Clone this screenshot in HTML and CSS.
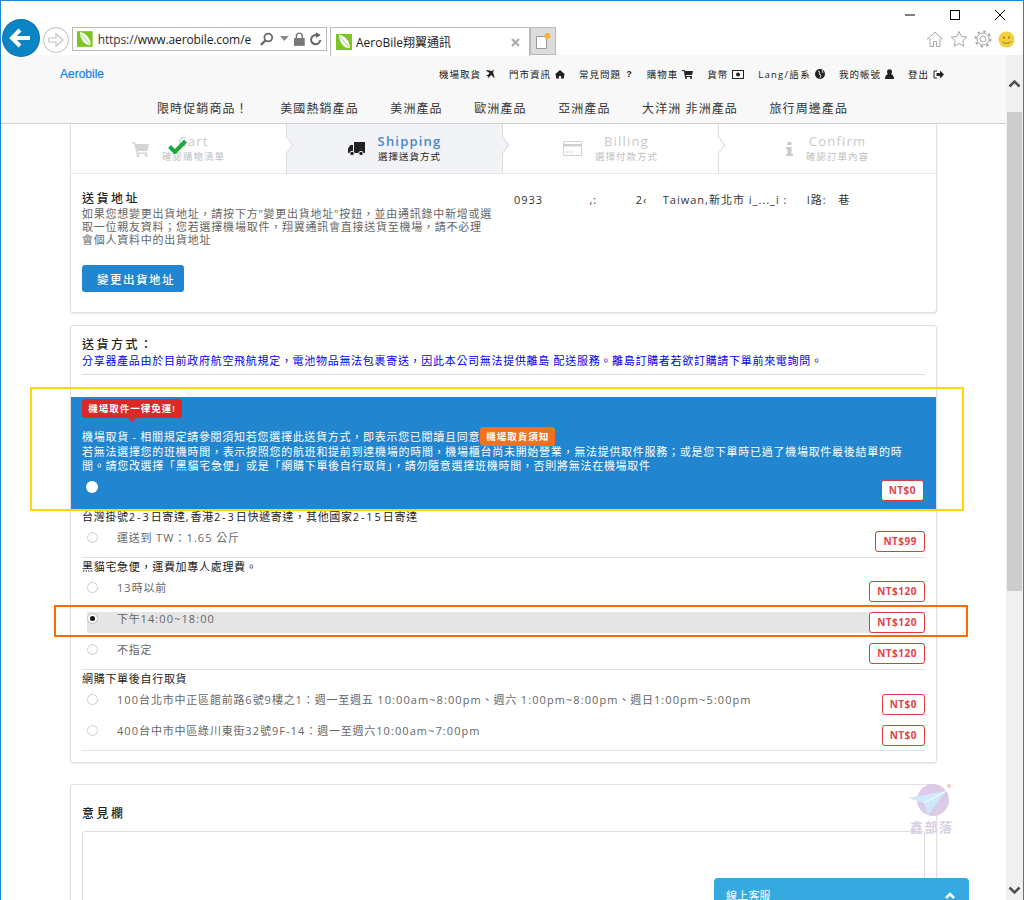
FILE: index.html
```html
<!DOCTYPE html>
<html lang="zh-Hant">
<head>
<meta charset="utf-8">
<title>AeroBile翔翼通訊</title>
<link rel="stylesheet" href="styles.css">
</head>
<body>
<div class="window">
  <div class="chrome">
    <div class="navgroup">
      <button class="back"><svg width="36" height="36" viewBox="0 0 36 36"><path d="M27 18H10M17 10l-8 8 8 8" fill="none" stroke="#fff" stroke-width="4"/></svg></button>
      <button class="forward"><svg width="26" height="26" viewBox="0 0 26 26"><circle cx="13" cy="13" r="12.5" fill="#fff" stroke="#bdbdbd"/><path d="M6 11h7V7l7 6-7 6v-4H6z" fill="none" stroke="#c4c4c4" stroke-width="1.2"/></svg></button>
      <div class="address">
        <svg class="fav" width="16" height="16" viewBox="0 0 16 16"><rect width="16" height="16" fill="#7cc520"/><path d="M3 1c5 0 11 6 11 13-6 1-11-6-11-13z" fill="#fff"/><path d="M4 3l9 10" stroke="#7cc520" stroke-width=".8"/></svg>
        <span class="url"><span class="url-a">https://</span>www.aerobile.com/e</span>
        <svg width="16" height="16" viewBox="0 0 16 16"><circle cx="9.5" cy="6.5" r="4" fill="none" stroke="#666" stroke-width="1.8"/><path d="M6.500 9.500L2 14" stroke="#666" stroke-width="2.200"/></svg>
        <svg width="9" height="6" viewBox="0 0 9 6"><path d="M0 0h9L4.500 5z" fill="#888"/></svg>
        <svg width="12" height="14" viewBox="0 0 12 14"><rect y="6" width="11" height="8" fill="#777"/><path d="M2.500 6V4a3 3 0 0 1 6 0v2" fill="none" stroke="#777" stroke-width="1.500"/></svg>
        <svg width="12" height="14" viewBox="0 0 12 14"><path d="M10.500 8A4.700 4.700 0 1 1 7.500 3.300" fill="none" stroke="#666" stroke-width="2"/><path d="M6 0l5 3-5 3z" fill="#666"/></svg>
      </div>
      <div class="tab">
        <svg width="16" height="16" viewBox="0 0 16 16"><rect width="16" height="16" fill="#7cc520"/><path d="M3 1c5 0 11 6 11 13-6 1-11-6-11-13z" fill="#fff"/><path d="M4 3l9 10" stroke="#7cc520" stroke-width=".8"/></svg>
        <span class="tab-title">AeroBile翔翼通訊</span>
        <svg class="tab-x" width="9" height="9" viewBox="0 0 9 9"><path d="M1 1l7 7M8 1L1 8" stroke="#aaa" stroke-width="2"/></svg>
      </div>
      <div class="newtab"><svg width="18" height="18" viewBox="0 0 18 18"><path d="M2.500 4.500h10v12h-10z" fill="#fff" stroke="#999"/><circle cx="13.500" cy="4" r="3" fill="#f9b233"/></svg></div>
    </div>
    <div class="rightgroup">
      <div class="winctl">
        <svg width="12" height="12" viewBox="0 0 12 12"><path d="M1 6h10" stroke="#000"/></svg>
        <svg width="12" height="12" viewBox="0 0 12 12"><rect x="1.500" y="1.500" width="9" height="9" fill="none" stroke="#000"/></svg>
        <svg width="12" height="12" viewBox="0 0 12 12"><path d="M1 1l10 10M11 1L1 11" stroke="#000"/></svg>
      </div>
      <div class="tools">
        <svg width="18" height="18" viewBox="0 0 18 18"><path d="M1 9.500L9 2l8 7.500M4 8v8.500h3.500v-5h3v5H14V8" fill="#fff" stroke="#a8a8a8"/></svg>
        <svg width="18" height="18" viewBox="0 0 18 18"><path d="M9 1.500l2.300 5 5.400.6-4 3.700 1.100 5.400L9 13.500l-4.800 2.700 1.100-5.400-4-3.700 5.400-.6z" fill="#fff" stroke="#a8a8a8"/></svg>
        <svg width="18" height="18" viewBox="0 0 18 18"><circle cx="9" cy="9" r="3" fill="none" stroke="#a8a8a8"/><circle cx="9" cy="9" r="6" fill="none" stroke="#a8a8a8" stroke-width="1"/><circle cx="9" cy="9" r="7.500" fill="none" stroke="#a8a8a8" stroke-width="2" stroke-dasharray="2.500 3.400"/></svg>
        <svg width="17" height="17" viewBox="0 0 17 17"><circle cx="8.500" cy="8.500" r="8" fill="#f2cf3c"/><circle cx="6" cy="6.500" r="1" fill="#8a7420"/><circle cx="11" cy="6.500" r="1" fill="#8a7420"/><path d="M4.500 10.500c1.500 2.500 6.500 2.500 8 0" fill="none" stroke="#8a7420"/></svg>
      </div>
    </div>
  </div>

  <div class="viewport">
    <div class="page">
      <header class="site-header">
        <div class="toprow">
          <a class="logo">Aerobile</a>
          <nav class="topnav">
            <a>機場取貨<svg width="10" height="10" viewBox="0 0 10 10"><path d="M9.500.500L7 2 1.500 1 1 1.500l3.500 2.500L3 6 1 6l2 1.500L4 9.500l.5-2 2-1.500L9 9l.5-.5L8 3z" fill="#222"/></svg></a>
            <a>門市資訊<svg width="10" height="10" viewBox="0 0 10 10"><path d="M0 5.500L5 1l5 4.500-1 .5v3.500H6V7H4v2.500H1V6z" fill="#222"/></svg></a>
            <a>常見問題<b class="q">?</b></a>
            <a>購物車<svg width="11" height="10" viewBox="0 0 11 10"><path d="M0 1h2.500l.5 1h8l-1 4H4l.3 1H10v1H3L1.800 2H0z" fill="#222"/><circle cx="4" cy="9" r="1" fill="#222"/><circle cx="9" cy="9" r="1" fill="#222"/></svg></a>
            <a>貨幣<svg width="12" height="9" viewBox="0 0 12 9"><rect x=".5" y=".5" width="11" height="8" fill="none" stroke="#222"/><circle cx="6" cy="4.500" r="2" fill="#222"/></svg></a>
            <a class="lang">Lang/語系<svg width="10" height="10" viewBox="0 0 10 10"><circle cx="5" cy="5" r="5" fill="#222"/><path d="M3 2l2 1-1 2 2 1-1 3M7 1l1 3" stroke="#fff" fill="none" stroke-width=".8"/></svg></a>
            <a>我的帳號<svg width="9" height="10" viewBox="0 0 9 10"><circle cx="4.500" cy="2.800" r="2.500" fill="#222"/><path d="M0 10c0-7 9-7 9 0z" fill="#222"/></svg></a>
            <a>登出<svg width="11" height="9" viewBox="0 0 11 9"><path d="M4 1H1v7h3" fill="none" stroke="#222"/><path d="M3.500 3H7V.5l4 4-4 4V6H3.500z" fill="#222"/></svg></a>
          </nav>
        </div>
        <nav class="mainnav">
          <a>限時促銷商品！</a><a>美國熱銷產品</a><a>美洲產品</a><a>歐洲產品</a><a>亞洲產品</a><a>大洋洲 非洲產品</a><a>旅行周邊產品</a>
        </nav>
      </header>

      <section class="card card-first">
        <div class="steps">
          <div class="step done">
            <svg class="step-icon" width="17" height="16" viewBox="0 0 17 16"><path d="M0 1h3l.6 2H17l-1.500 7H5.500l.4 1.500H15V13H4.500L2 2.500H0z" fill="#d4d4d4"/><circle cx="6" cy="14.500" r="1.500" fill="#d4d4d4"/><circle cx="14" cy="14.500" r="1.500" fill="#d4d4d4"/></svg>
            <div class="step-text"><div class="step-title">Cart</div><div class="step-sub">確認購物清單</div></div>
            <svg class="check" width="19" height="15" viewBox="0 0 19 15"><path d="M1.500 7.500L7 13 17.500 2" fill="none" stroke="#1fa83f" stroke-width="4"/></svg>
          </div>
          <div class="step active">
            <svg class="step-icon" width="17" height="14" viewBox="0 0 17 14"><path d="M6 0h11v11H6zM5 3v8H0V6.500L2.500 3z" fill="#222"/><circle cx="4" cy="11.500" r="2.200" fill="#222" stroke="#f0f2f5"/><circle cx="13" cy="11.500" r="2.200" fill="#222" stroke="#f0f2f5"/></svg>
            <div class="step-text"><div class="step-title">Shipping</div><div class="step-sub">選擇送貨方式</div></div>
          </div>
          <div class="step">
            <svg class="step-icon" width="19" height="15" viewBox="0 0 19 15"><rect width="19" height="15" rx="1.500" fill="#d0d0d0"/><rect x="1" y="5.500" width="17" height="8.500" fill="#fff"/><rect x="1" y="1" width="17" height="2" fill="#fff"/><rect x="3" y="10.500" width="3" height="1" fill="#d0d0d0"/><rect x="7" y="10.500" width="3" height="1" fill="#d0d0d0"/></svg>
            <div class="step-text"><div class="step-title">Billing</div><div class="step-sub">選擇付款方式</div></div>
          </div>
          <div class="step last">
            <svg class="step-icon" width="7" height="14" viewBox="0 0 7 14"><rect x="1.500" width="4" height="3" fill="#c8c8c8"/><path d="M0 5h5.500v7H7v2H0v-2h1.500V7H0z" fill="#c8c8c8"/></svg>
            <div class="step-text"><div class="step-title">Confirm</div><div class="step-sub">確認訂單內容</div></div>
          </div>
        </div>
        <div class="addr">
          <div class="addr-left">
            <h3 class="heading">送貨地址</h3>
            <p class="addr-desc">如果您想變更出貨地址，請按下方"變更出貨地址"按鈕，並由通訊錄中新增或選<br>取一位親友資料；您若選擇機場取件，翔翼通訊會直接送貨至機場，請不必理<br>會個人資料中的出貨地址</p>
            <button class="btn-primary">變更出貨地址</button>
          </div>
          <div class="addr-right">0933            ,:          2‹    Taiwan,新北市 i_..._i :     I路:   巷</div>
        </div>
      </section>

      <section class="card card-ship">
        <div class="ship-head">
          <h3 class="heading">送貨方式：</h3>
          <p class="notice">分享器產品由於目前政府航空飛航規定，電池物品無法包裹寄送，因此本公司無法提供離島 配送服務。離島訂購者若欲訂購請下單前來電詢問。</p>
        </div>
        <div class="panel">
          <div class="tag">機場取件一律免運!</div>
          <div class="panel-line1">機場取貨 - 相關規定請參閱須知若您選擇此送貨方式，即表示您已閱讀且同意<a class="btn-orange">機場取貨須知</a></div>
          <p class="panel-text">若無法選擇您的班機時間，表示按照您的航班和提前到達機場的時間，機場櫃台尚未開始營業，無法提供取件服務；或是您下單時已過了機場取件最後結單的時<br>間。請您改選擇「黑貓宅急便」或是「網購下單後自行取貨」，請勿隨意選擇班機時間，否則將無法在機場取件</p>
          <div class="panel-foot"><span class="radio-white"></span><span class="price price-w">NT$0</span></div>
        </div>
        <div class="group g1">
          <div class="group-title">台灣掛號<span class="num">2-3</span>日寄達<span class="num">,</span>香港<span class="num">2-3</span>日快遞寄達，其他國家<span class="num">2-15</span>日寄達</div>
          <div class="opt"><span class="radio"></span><span class="opt-label">運送到 <span class="lt">TW：1.65</span> 公斤</span><span class="price">NT$99</span></div>
        </div>
        <div class="group g2">
          <div class="group-title">黑貓宅急便，運費加專人處理費。</div>
          <div class="opt"><span class="radio"></span><span class="opt-label"><span class="lt">13</span>時以前</span><span class="price">NT$120</span></div>
          <div class="opt selected"><span class="radio on"></span><span class="opt-label">下午<span class="lt">14:00~18:00</span></span><span class="price">NT$120</span></div>
          <div class="opt"><span class="radio"></span><span class="opt-label">不指定</span><span class="price">NT$120</span></div>
        </div>
        <div class="group g3">
          <div class="group-title">網購下單後自行取貨</div>
          <div class="opt"><span class="radio"></span><span class="opt-label"><span class="lt">100</span>台北市中正區館前路<span class="lt">6</span>號<span class="lt">9</span>樓之<span class="lt">1</span>：週一至週五 <span class="lt">10:00am~8:00pm</span>、週六 <span class="lt">1:00pm~8:00pm</span>、週日<span class="lt">1:00pm~5:00pm</span></span><span class="price">NT$0</span></div>
          <div class="opt"><span class="radio"></span><span class="opt-label"><span class="lt">400</span>台中市中區綠川東街<span class="lt">32</span>號<span class="lt">9F-14</span>：週一至週六<span class="lt">10:00am~7:00pm</span></span><span class="price">NT$0</span></div>
        </div>
      </section>

      <section class="card card-note">
        <h3 class="heading note-head">意見欄</h3>
        <div class="textarea"></div>
      </section>

      <div class="mark mark-yellow"></div>
      <div class="mark mark-orange"></div>
      <div class="watermark">
        <svg width="45" height="38" viewBox="0 0 45 38"><circle cx="25" cy="17" r="16" fill="#dccbe8"/><circle cx="41" cy="3" r="2" fill="#f7c6cc"/><path d="M0 15L38 8 20 32 16 20z" fill="#cde9fb"/><path d="M16 20L38 8" stroke="#fff" stroke-width="1"/></svg>
        <div class="wm-text">鑫部落</div>
      </div>
      <div class="chat"><span>線上客服</span><svg width="10" height="7" viewBox="0 0 10 7"><path d="M1 6l4-4 4 4" fill="none" stroke="#fff" stroke-width="2.500"/></svg></div>
    </div>
    <div class="scrollbar">
      <div class="sb-up"><svg width="13" height="9" viewBox="0 0 13 9"><path d="M1.500 7.500l5-5 5 5" fill="none" stroke="#505050" stroke-width="2.500"/></svg></div>
      <div class="sb-thumb"></div>
      <div class="sb-rest"></div>
      <div class="sb-down"><svg width="13" height="9" viewBox="0 0 13 9"><path d="M1.500 1.500l5 5 5-5" fill="none" stroke="#505050" stroke-width="2.500"/></svg></div>
    </div>
  </div>
</div>
</body>
</html>
```

FILE: styles.css
```css
* { box-sizing: border-box; }
html, body { margin: 0; padding: 0; }
body {
  width: 1024px;
  height: 900px;
  overflow: hidden;
  background: #fff;
  font-family: "Open Sans", "Noto Sans CJK TC", sans-serif;
  color: #333;
}
h3, p { margin: 0; }
button { font-family: inherit; border: 0; padding: 0; cursor: pointer; }

.window {
  position: relative;
  display: flex;
  flex-direction: column;
  width: 1024px;
  height: 900px;
  border: 1px solid #1f86d6;
  border-bottom: 0;
  overflow: hidden;
}

/* browser chrome */
.chrome {
  position: relative;
  z-index: 3;
  display: flex;
  justify-content: space-between;
  height: 54px;
  background: #fff;
}
.navgroup { display: flex; align-items: flex-start; padding: 26px 0 0 2px; }
.back {
  display: flex;
  align-items: center;
  justify-content: center;
  width: 36px;
  height: 36px;
  margin: -7px 4px 0 0;
  border-radius: 50%;
  background: #0b84c6;
  box-shadow: 0 0 0 1px #0a6ea6;
}
.forward { width: 26px; height: 26px; margin-right: 3px; background: none; }
.address {
  display: flex;
  align-items: center;
  gap: 5px;
  width: 255px;
  height: 24px;
  padding: 0 4px;
  border: 1px solid #b9b9b9;
  background: #fff;
}
.url {
  width: 160px;
  font-size: 12px;
  letter-spacing: -.1px;
  color: #222;
  white-space: nowrap;
}
.url-a { color: #333; }
.tab {
  display: flex;
  align-items: center;
  gap: 4px;
  width: 200px;
  height: 29px;
  margin-left: 3px;
  padding: 0 5px;
  border: 1px solid #b9b9b9;
  border-bottom: 0;
  background: #fff;
}
.tab-title { flex: 1; font-size: 12px; color: #222; white-space: nowrap; }
.tab-x { margin-right: 4px; }
.newtab {
  display: flex;
  align-items: center;
  justify-content: center;
  width: 26px;
  height: 28px;
  border: 1px solid #b9b9b9;
  background: #dcdcdc;
}
.rightgroup { display: flex; flex-direction: column; align-items: flex-end; padding-right: 8px; }
.winctl { display: flex; gap: 33px; padding: 8px 9px 0 0; }
.tools { display: flex; gap: 6px; align-items: center; margin-top: 9px; }

/* page */
.viewport { display: flex; flex: 1; min-height: 0; }
.page { position: relative; flex: 1; min-width: 0; overflow: hidden; background: #fff; }
.site-header {
  height: 69px;
  background: #f8f8f8;
  border-bottom: 1px solid #cfcfcf;
}
.toprow { display: flex; align-items: center; justify-content: space-between; height: 38px; padding: 0 62px 0 59px; }
.logo { font-family: "Liberation Sans", sans-serif; font-size: 12px; color: #1a7ee0; -webkit-text-stroke: .2px #1a7ee0; }
.topnav { display: flex; gap: 14px; }
.topnav a {
  display: flex;
  align-items: center;
  gap: 4px;
  font-size: 9.500px;
  letter-spacing: 1px;
  color: #222;
  white-space: nowrap;
}
.topnav .lang { letter-spacing: 1.300px; }
.q { font-size: 9px; font-family: "Liberation Sans", sans-serif; margin-left: 1px; }
.mainnav { display: flex; gap: 31.500px; padding-left: 156px; height: 30px; }
.mainnav a { font-size: 12px; letter-spacing: 1.100px; line-height: 31px; color: #333; white-space: nowrap; }

.card {
  width: 867px;
  margin-left: 69px;
  background: #fff;
  border: 1px solid #e0e0e0;
  border-radius: 3px;
  box-shadow: 0 1px 2px rgba(0,0,0,.08);
}
.card-first { height: 189px; border-top: 0; border-radius: 0 0 3px 3px; }
.steps { display: flex; height: 50px; border-bottom: 1px solid #e8e8e8; }
.step {
  position: relative;
  display: flex;
  flex: 0 0 216px;
  align-items: center;
  justify-content: center;
  gap: 13px;
  border-right: 1px solid #dcdcdc;
}
.step.last { flex: 1; border-right: 0; }
.step:not(.last)::after {
  content: "";
  position: absolute;
  z-index: 1;
  top: 15px;
  right: -6px;
  width: 11px;
  height: 11px;
  background: #fff;
  border-top: 1px solid #dcdcdc;
  border-right: 1px solid #dcdcdc;
  transform: rotate(45deg) skew(8deg, 8deg);
}
.step.active { background: #f1f3f6; }
.step.active::after { background: #f1f3f6; }
.step-text { text-align: center; }
.step-title { font-size: 13px; line-height: 14px; letter-spacing: 1.200px; color: #c9c9c9; }
.step-sub { margin-top: 2px; font-size: 9.500px; line-height: 13px; letter-spacing: 1px; color: #c0c0c0; white-space: nowrap; }
.step.active .step-title { color: #4a86c8; font-weight: 600; }
.step.active .step-sub { color: #222; }
.check { position: absolute; top: 15px; left: 97px; }

.addr { display: flex; padding: 17px 11px 0; }
.addr-left { width: 432px; flex: none; }
.heading { font-size: 12px; font-weight: 500; letter-spacing: 2.500px; line-height: 16px; color: #222; }
.addr-desc { font-size: 11px; letter-spacing: .76px; line-height: 13px; color: #666; white-space: nowrap; }
.btn-primary {
  display: block;
  width: 102px;
  height: 27px;
  margin-top: 19px;
  padding-left: 6px;
  border-radius: 3px;
  background: #2185d0;
  color: #fff;
  font-size: 11.500px;
  letter-spacing: 1.500px;
  font-weight: 500;
  white-space: nowrap;
}
.addr-right { padding-top: 1px; font-size: 11px; letter-spacing: 1px; line-height: 16px; color: #333; white-space: pre; }

.card-ship { height: 438px; margin-top: 12px; }
.ship-head { height: 71px; margin: 0 11px; padding-top: 11px; }
.notice {
  height: 22px;
  border-bottom: 1px solid #ddd;
  font-size: 11px;
  letter-spacing: .7px;
  line-height: 15px;
  color: #0000f0;
  white-space: nowrap;
}
.panel { position: relative; height: 112px; padding: 2px 11px 0; background: #2185d0; color: #fff; }
.tag {
  position: relative;
  width: 100px;
  height: 19px;
  border-radius: 3px;
  background: #db2828;
  font-size: 9.500px;
  line-height: 19px;
  letter-spacing: 1px;
  font-weight: 600;
  text-align: center;
  white-space: nowrap;
}
.tag::after {
  content: "";
  position: absolute;
  left: 46px;
  bottom: -4px;
  width: 8px;
  height: 8px;
  background: #db2828;
  transform: rotate(45deg) scale(.7);
}
.panel-line1 {
  display: flex;
  align-items: center;
  height: 18px;
  margin-top: 9px;
  font-size: 11px;
  letter-spacing: .72px;
  white-space: nowrap;
}
.btn-orange {
  flex: none;
  width: 75px;
  height: 19px;
  border-radius: 3px;
  background: #f2711c;
  font-size: 9.500px;
  line-height: 20px;
  letter-spacing: 1px;
  font-weight: 600;
  text-align: center;
  white-space: nowrap;
}
.panel-text { font-size: 11px; letter-spacing: .72px; line-height: 13.500px; white-space: nowrap; }
.panel-foot { display: flex; align-items: flex-start; justify-content: space-between; margin-top: 8px; }
.radio-white { width: 12px; height: 12px; margin: 1px 0 0 4px; border-radius: 50%; background: #fff; }
.price {
  flex: none;
  margin-left: auto;
  padding: 0 7px;
  height: 21px;
  border: 1px solid #e03a3a;
  border-radius: 3px;
  background: #fff;
  color: #e0434a;
  font-size: 10px;
  font-weight: 700;
  letter-spacing: .5px;
  line-height: 19px;
}
.price-w { margin-right: 1px; }

.group { margin: 0 11px; border-bottom: 1px solid #e2e2e2; padding-bottom: 4px; }
.g1 { height: 49px; }
.g2 { height: 112px; }
.g3 { height: 81px; }
.group-title { font-size: 11px; letter-spacing: .7px; line-height: 16px; color: #222; white-space: nowrap; }
.num { letter-spacing: 1.900px; }
.opt {
  display: flex;
  align-items: flex-start;
  height: 21px;
  margin-top: 10px;
  margin-left: 5px;
}
.g1 .opt { margin-top: 6px; }
.g2 .group-title, .g3 .group-title { padding-top: 1px; height: 17px; }
.g2 .group-title + .opt, .g3 .group-title + .opt { margin-top: 6px; }
.g3 .price { margin-top: 1px; }
.opt.selected { background: #e5e5e5; }
.radio {
  flex: none;
  width: 11px;
  height: 11px;
  margin: 1px 19px 0 0;
  border: 1px solid #cfcfcf;
  border-radius: 50%;
  background: #fff;
}
.radio.on { position: relative; border-color: #bbb; }
.radio.on::after {
  content: "";
  position: absolute;
  left: 2px;
  top: 2px;
  width: 5px;
  height: 5px;
  border-radius: 50%;
  background: #111;
}
.opt-label { font-size: 11px; letter-spacing: .8px; line-height: 14px; color: #666; white-space: nowrap; }
.lt { letter-spacing: 1.080px; }

.card-note { height: 200px; margin-top: 21px; padding: 21px 11px 0; }
.note-head { margin-bottom: 9px; }
.textarea { height: 140px; border: 1px solid #ddd; border-radius: 3px; }

/* annotations and overlays */
.mark { position: absolute; pointer-events: none; }
.mark-yellow { left: 29px; top: 332px; width: 934px; height: 124px; border: 2px solid #ffd800; }
.mark-orange { left: 53px; top: 550px; width: 914px; height: 32px; border: 2px solid #ff6a00; }
.watermark { position: absolute; left: 907px; top: 728px; width: 48px; }
.watermark svg { display: block; }
.wm-text { padding-left: 2px; font-size: 13px; line-height: 13px; letter-spacing: 1.500px; color: #d9d0e6; font-weight: 700; white-space: nowrap; }
.chat {
  position: absolute;
  left: 713px;
  top: 823px;
  display: flex;
  justify-content: space-between;
  width: 255px;
  height: 40px;
  padding: 0 14px 0 12px;
  border-radius: 4px 4px 0 0;
  background: #36a9e1;
  color: #fff;
  font-size: 11px;
  letter-spacing: .2px;
}
.chat span { line-height: 24px; padding-top: 6px; }
.chat svg { margin-top: 14px; }

.scrollbar { display: flex; flex-direction: column; width: 17px; flex: none; background: #f0f0f0; }
.sb-up { display: flex; justify-content: center; align-items: center; height: 57px; }
.sb-thumb { height: 479px; margin: 0 1px; background: #cdcdcd; }
.sb-rest { flex: 1; }
.sb-down { display: flex; justify-content: center; align-items: center; height: 20px; }
```
